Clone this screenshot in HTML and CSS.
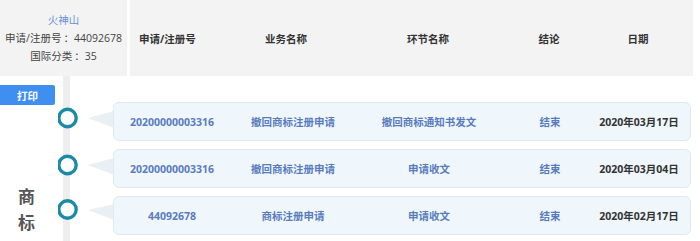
FILE: index.html
```html
<!DOCTYPE html>
<html lang="zh">
<head>
<meta charset="utf-8">
<title>商标流程</title>
<link rel="stylesheet" href="styles.css">
</head>
<body>
<div class="top">
  <div class="info">
    <div class="info-name">火神山</div>
    <div>申请/注册号<span class="colon">：</span>44092678</div>
    <div>国际分类<span class="colon">：</span>35</div>
  </div>
  <div class="head">
    <div class="h h1">申请/注册号</div>
    <div class="h">业务名称</div>
    <div class="h">环节名称</div>
    <div class="h">结论</div>
    <div class="h">日期</div>
  </div>
</div>
<div class="main">
  <div class="btn-cell"><button class="print">打印</button></div>
  <div class="line"></div>
  <div class="label">商<br>标</div>

  <div class="marker m1"><svg width="55" height="40" viewBox="0 0 55 40"><polygon points="30,16 56,9 56,26" class="tail"/><circle cx="9.5" cy="16" r="8.7" class="dot"/></svg></div>
  <div class="card c1">
    <div class="c num">20200000003316</div>
    <div class="c">撤回商标注册申请</div>
    <div class="c">撤回商标通知书发文</div>
    <div class="c">结束</div>
    <div class="c date">2020年03月17日</div>
  </div>

  <div class="marker m2"><svg width="55" height="40" viewBox="0 0 55 40"><polygon points="30,16 56,9 56,26" class="tail"/><circle cx="9.5" cy="16" r="8.7" class="dot"/></svg></div>
  <div class="card c2">
    <div class="c num">20200000003316</div>
    <div class="c">撤回商标注册申请</div>
    <div class="c">申请收文</div>
    <div class="c">结束</div>
    <div class="c date">2020年03月04日</div>
  </div>

  <div class="marker m3"><svg width="55" height="40" viewBox="0 0 55 40"><polygon points="30,14 56,8 56,24" class="tail"/><circle cx="9.5" cy="13.5" r="8.7" class="dot"/></svg></div>
  <div class="card c3">
    <div class="c num">44092678</div>
    <div class="c">商标注册申请</div>
    <div class="c">申请收文</div>
    <div class="c">结束</div>
    <div class="c date">2020年02月17日</div>
  </div>
</div>
</body>
</html>
```
FILE: styles.css
```css
* { box-sizing: border-box; }
html, body { margin: 0; padding: 0; background: #fff; }
body {
  width: 700px;
  height: 241px;
  overflow: hidden;
  font-family: "Open Sans", "Noto Sans CJK SC", sans-serif;
  font-size: 10.5px;
  color: #333;
}
.top {
  display: flex;
  gap: 3px;
  height: 76px;
}
.info {
  width: 127px;
  background: #f3f3f3;
  text-align: center;
  padding-top: 11px;
  line-height: 18px;
  color: #444;
}
.colon {
  display: inline-block;
  padding-left: 2px;
}
.info-name { color: #6b8fd3; }
.head {
  width: 563px;
  background: #f3f3f3;
  display: grid;
  grid-template-columns: 95px 122px 162px 80px 98px;
  align-items: center;
  font-weight: 700;
  color: #333;
}
.h { text-align: center; }
.h1 { text-align: left; padding-left: 9px; }

.main {
  display: grid;
  grid-template-columns: 58px 55px 578px;
  grid-template-rows: 26px 47px 47px 47px;
}
.btn-cell { grid-column: 1; grid-row: 1; padding-top: 9px; }
.print {
  display: block;
  width: 55px;
  height: 20px;
  border: 0;
  border-radius: 0 2px 2px 0;
  background: #3f8ff0;
  color: #fff;
  font-family: inherit;
  font-size: 10.5px;
  font-weight: 700;
  padding: 0;
}
.line {
  grid-column: 2;
  grid-row: 1 / -1;
  margin-left: 5px;
  width: 7px;
  background: #eeeeee;
}
.label {
  grid-column: 1;
  grid-row: 3 / 5;
  font-size: 17px;
  font-weight: 700;
  color: #555;
  line-height: 26px;
  padding: 34px 0 0 18px;
  font-family: "Noto Sans CJK SC", sans-serif;
}
.marker { grid-column: 2; display: flex; }
.m1 { grid-row: 2; }
.m2 { grid-row: 3; }
.m3 { grid-row: 4; }
.marker svg { display: block; }
.dot { fill: #fff; stroke: #1a8aa7; stroke-width: 3.4; }
.tail { fill: #eaeff3; }
.card {
  grid-column: 3;
  height: 39px;
  background: #f0f7fc;
  border: 1px solid #dfe9f1;
  border-radius: 6px;
  display: grid;
  grid-template-columns: 116px 126px 146px 96px 82px;
  align-items: center;
  color: #5a7cbf;
  font-weight: 700;
}
.c1 { grid-row: 2; }
.c2 { grid-row: 3; }
.c3 { grid-row: 4; }
.c { text-align: center; white-space: nowrap; }
.date { color: #333; }
```
